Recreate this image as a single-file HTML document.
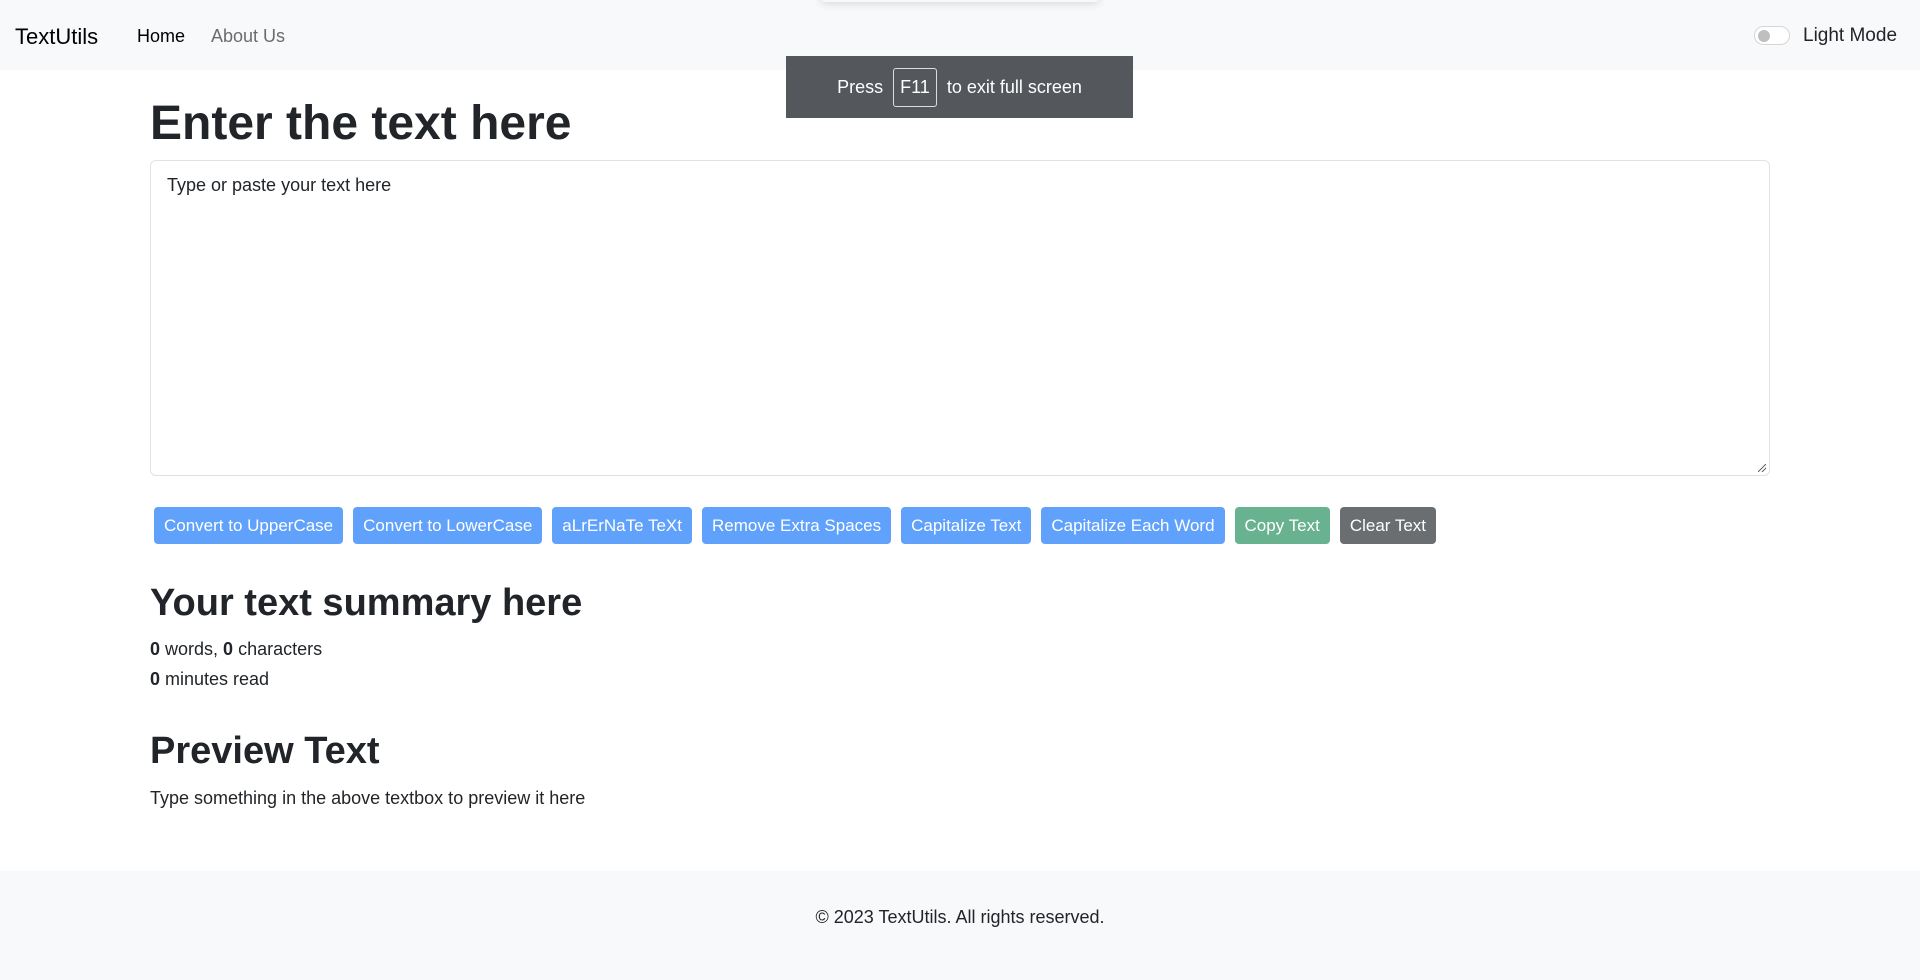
<!DOCTYPE html>
<html><head><meta charset="utf-8"><style>
*{box-sizing:border-box}
body{margin:0;font-family:"Liberation Sans",sans-serif;color:#212529;background:#fff;width:1920px;height:980px;overflow:hidden;position:relative;font-size:16px}
nav{height:70px;background:#f8f9fa;position:relative}
.brand{position:absolute;left:15px;top:24px;font-size:22px;color:#000}
.nl{position:absolute;top:26px;font-size:18px}
.sw{position:absolute;left:1754px;top:26px;width:36px;height:19px;border:1px solid #d6d6d6;border-radius:10px;background:#fff}
.sw:after{content:"";position:absolute;left:3px;top:3px;width:12px;height:12px;border-radius:50%;background:#bfbfbf}
.lm{position:absolute;left:1803px;top:25px;font-size:19px;color:#212529}
.f11{position:absolute;left:786px;top:56px;width:347px;height:62px;background:#54575b;color:#fff;font-size:18px;display:flex;align-items:center;justify-content:center;gap:10px}
.f11 span.k{border:1px solid #ddd;border-radius:3px;padding:8px 6px}
.shadow{position:absolute;left:820px;top:-10px;width:280px;height:12px;border-radius:10px;box-shadow:0 2px 8px rgba(0,0,0,.12)}
h1{position:absolute;left:150px;top:95px;margin:0;font-size:48px;font-weight:700;line-height:1.2}
.ta{position:absolute;left:150px;top:160px;width:1620px;height:316px;border:1px solid #dee2e6;border-radius:6px;padding:14px 16px;font-size:18px}
.ta:after{content:"";position:absolute;right:3px;bottom:3px;width:8px;height:8px;background:linear-gradient(135deg,transparent 45%,#666 45%,#666 55%,transparent 55%,transparent 70%,#666 70%,#666 80%,transparent 80%)}
.btns{position:absolute;left:154px;top:507px;display:flex;gap:10px}
.b{height:37px;padding:0 10px;border-radius:4px;color:#fff;font-size:17px;line-height:37px;background:#60a1fc}
h2{position:absolute;left:150px;margin:0;font-size:38px;font-weight:700;line-height:1.2}
.t{position:absolute;left:150px;font-size:18px}
footer{position:absolute;left:0;top:871px;width:1920px;height:109px;background:#f8f9fa;text-align:center;font-size:18px;line-height:92px}
</style></head><body>
<nav><div class="brand">TextUtils</div><div class="nl" style="left:137px;color:#000">Home</div><div class="nl" style="left:211px;color:#6c6c6c">About Us</div><div class="sw"></div><div class="lm">Light Mode</div></nav>
<div class="shadow"></div>
<h1>Enter the text here</h1>
<div class="ta">Type or paste your text here</div>
<div class="btns"><div class="b">Convert to UpperCase</div><div class="b">Convert to LowerCase</div><div class="b">aLrErNaTe TeXt</div><div class="b">Remove Extra Spaces</div><div class="b">Capitalize Text</div><div class="b">Capitalize Each Word</div><div class="b" style="background:#68b28f">Copy Text</div><div class="b" style="background:#6b6e71">Clear Text</div></div>
<h2 style="top:581px">Your text summary here</h2>
<div class="t" style="top:639px"><b>0</b> words, <b>0</b> characters</div>
<div class="t" style="top:669px"><b>0</b> minutes read</div>
<h2 style="top:729px">Preview Text</h2>
<div class="t" style="top:788px">Type something in the above textbox to preview it here</div>
<footer>© 2023 TextUtils. All rights reserved.</footer>
<div class="f11">Press <span class="k">F11</span> to exit full screen</div>
</body></html>
